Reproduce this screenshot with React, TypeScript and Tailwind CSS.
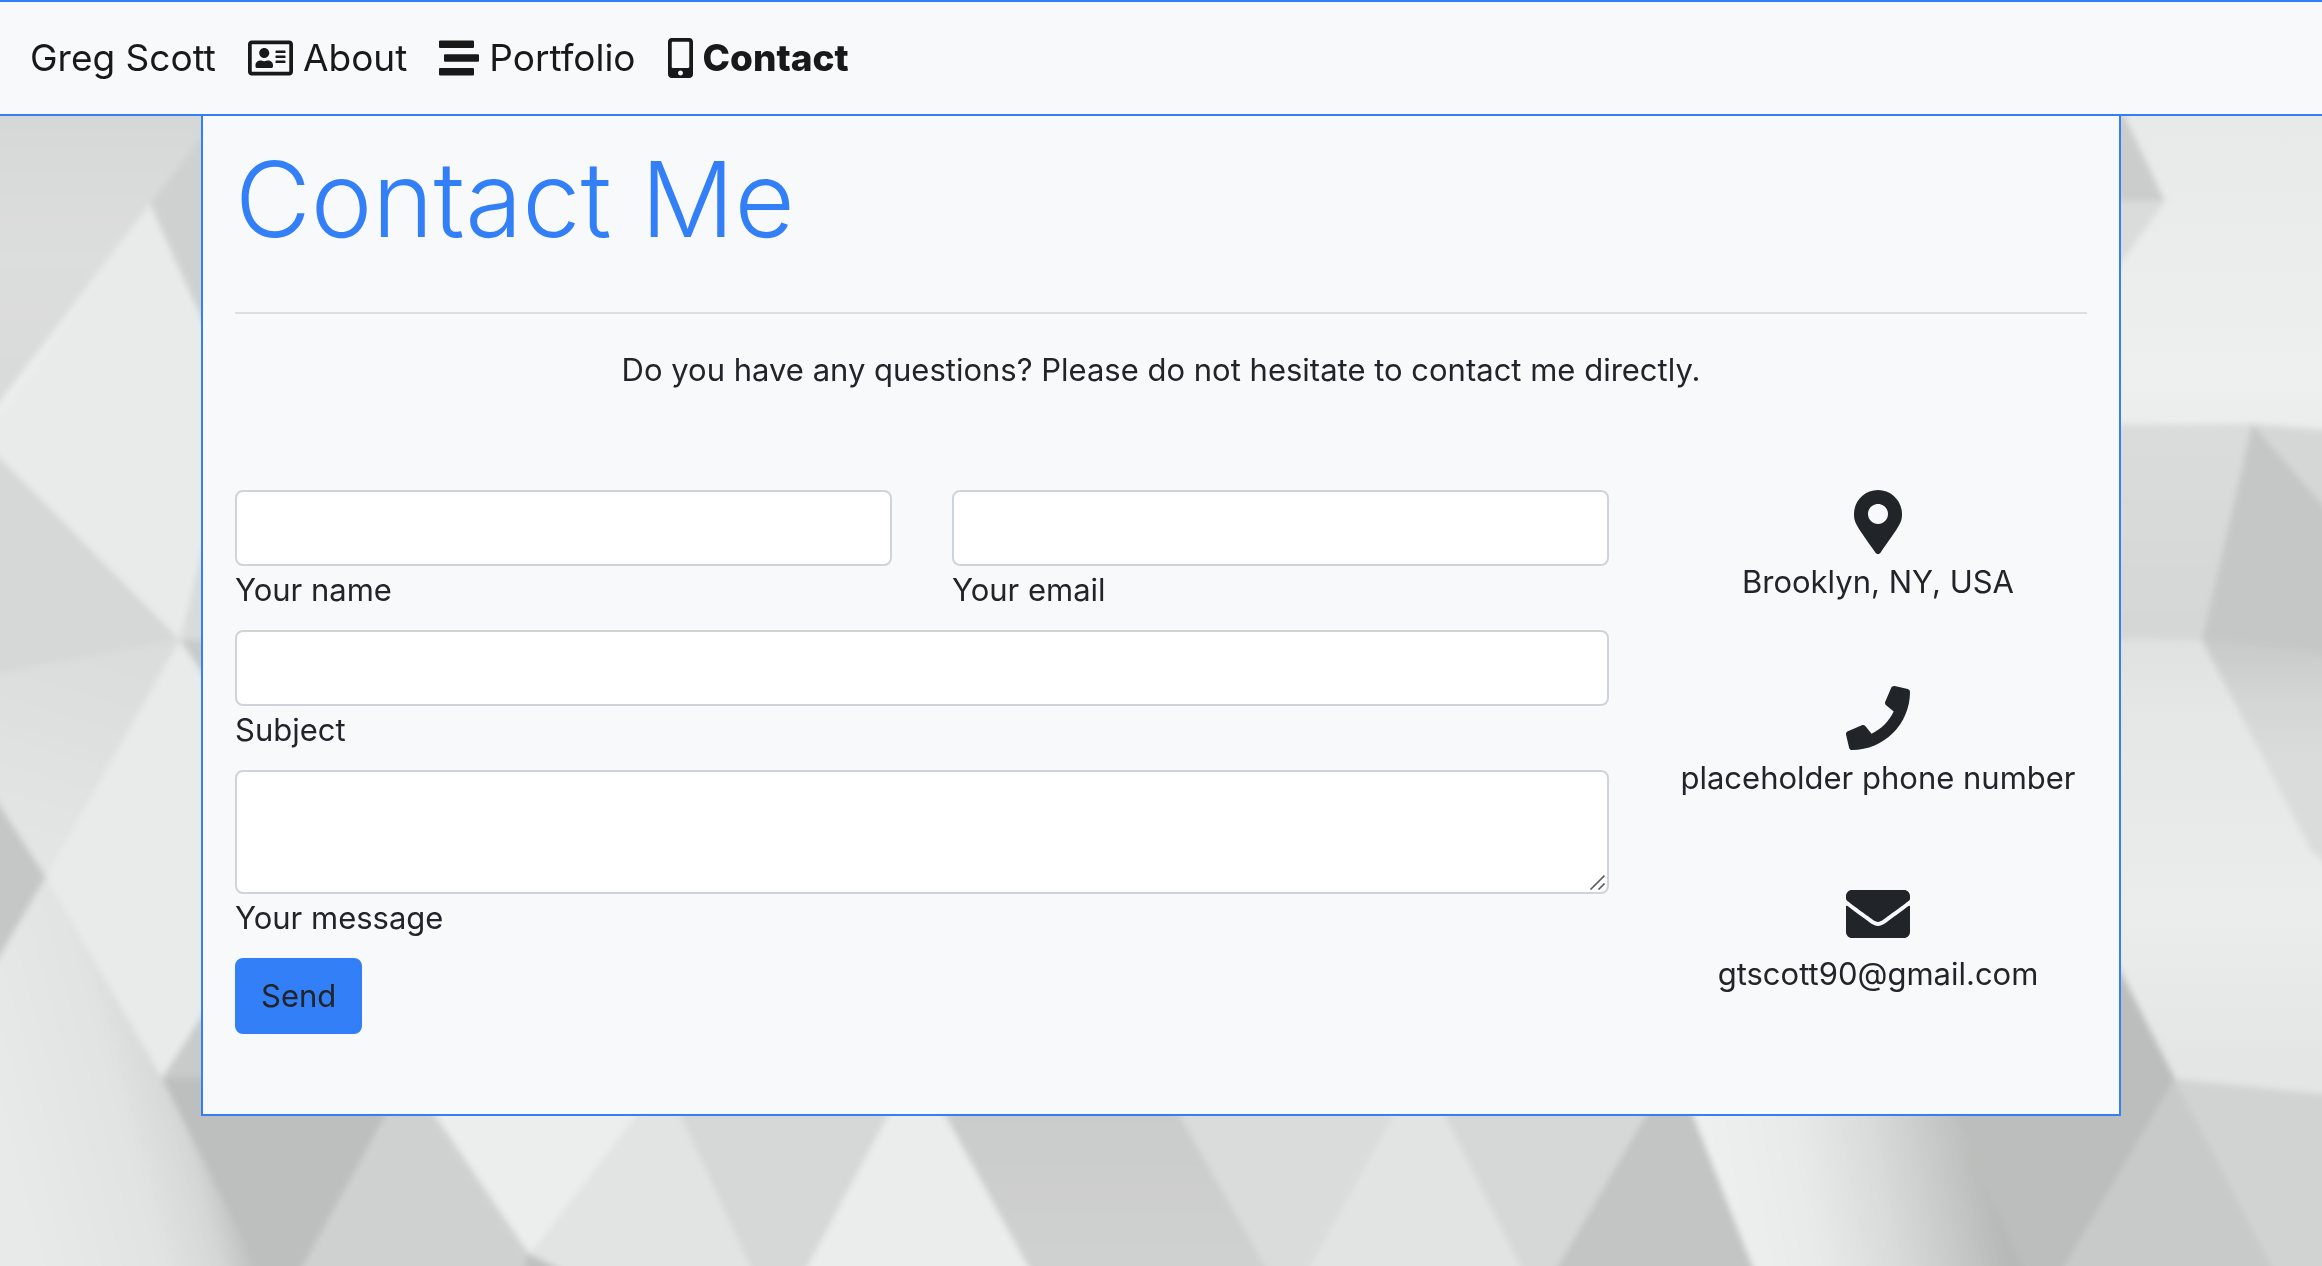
import type { ReactNode } from "react";
import {
  FaEnvelope,
  FaMapMarkerAlt,
  FaMobileAlt,
  FaPhone,
  FaRegAddressCard,
  FaStream,
} from "react-icons/fa";

const field =
  "block w-full rounded-lg border-2 border-[#ced4da] bg-white px-6 py-3 text-[31px] leading-12 text-[#495057] outline-none focus:border-[#327ff7] [&::-webkit-resizer]:bg-transparent";

const facets: [string, string][] = [
  // left side
  ["-20,90 260,90 150,204 -20,428", "url(#topLeft)"],
  ["150,204 215,120 260,120 260,450", "#cfd1d0"],
  ["-20,434 0,414 150,204 202,330 260,450 180,640 0,458 -20,440", "#e9ebea"],
  ["-20,438 0,458 180,640 -20,678", "#d6d8d7"],
  ["-20,677 180,640 46,877 -20,775", "url(#midLeft)"],
  ["180,640 202,551 260,450 260,640", "#d9dbda"],
  ["180,640 260,640 260,760", "#c8cac9"],
  ["46,877 180,640 260,760 260,960 162,1078", "#e8ebe9"],
  ["-20,775 46,877 -20,990", "#c5c7c6"],
  ["-20,990 46,877 162,1078 270,1290 -20,1290", "url(#corner)"],
  ["162,1078 202,1016 260,940 260,1078", "#c9cbca"],
  // bottom row
  ["162,1078 202,1078 400,1090 290,1290 267,1290", "#bcbfbd"],
  ["404,1084 414,1084 528,1253 528,1290 290,1290", "#cfd1d0"],
  ["414,1084 660,1084 530,1254", "#ebeeec"],
  ["528,1253 590,1270 590,1290 520,1290", "#bfc1c0"],
  ["660,1084 666,1084 761,1290 600,1290 530,1254", "#e2e4e3"],
  ["666,1084 905,1084 795,1290 761,1290", "#d6d8d7"],
  ["905,1084 928,1084 1041,1290 795,1290", "#ebedec"],
  ["928,1084 1162,1084 1279,1290 1041,1290", "url(#bottomMid)"],
  ["1162,1084 1411,1084 1297,1290 1279,1290", "#dadcdb"],
  ["1411,1084 1429,1084 1532,1290 1297,1290", "#e2e4e3"],
  ["1429,1084 1664,1084 1544,1290 1532,1290", "#d6d8d7"],
  ["1664,1084 1681,1084 1762,1290 1544,1290", "#c3c5c4"],
  ["1681,1084 1940,1084 2036,1290 1762,1290", "url(#sweep)"],
  ["1940,1084 2080,900 2122,974 2175,1079 2051,1290 2036,1290", "#bbbebc"],
  // right side
  ["2080,90 2112,90 2165,201 2080,201", "#cbcdcc"],
  ["2080,201 2165,201 2080,320", "#dadcdb"],
  ["2080,425 2252,424 2202,640 2080,638", "url(#band)"],
  ["2252,424 2342,431 2342,530", "#d5d7d6"],
  ["2252,424 2342,527 2342,658 2202,640", "#c5c7c6"],
  ["2202,640 2342,658 2342,875 2312,852", "url(#fold)"],
  ["2175,1079 2342,1096 2342,1290 2284,1290", "#d1d3d2"],
  ["2175,1079 2284,1290 2051,1290", "#c8cac9"],
];

function Background() {
  return (
    <svg
      aria-hidden="true"
      className="fixed inset-0 -z-10 h-full w-full"
      viewBox="0 0 2322 1266"
      preserveAspectRatio="xMidYMid slice"
    >
      <defs>
        <linearGradient id="base" x1="0" y1="0" x2="0" y2="1">
          <stop offset="0.1" stopColor="#e7eae8" />
          <stop offset="0.3" stopColor="#eef0ef" />
          <stop offset="0.5" stopColor="#dfe1e0" />
          <stop offset="0.56" stopColor="#e5e7e6" />
          <stop offset="0.72" stopColor="#eaedeb" />
          <stop offset="0.84" stopColor="#e3e6e4" />
        </linearGradient>
        <linearGradient id="topLeft" gradientUnits="userSpaceOnUse" x1="0" y1="116" x2="0" y2="400">
          <stop offset="0" stopColor="#d6d8d7" />
          <stop offset="0.5" stopColor="#dcdedd" />
          <stop offset="1" stopColor="#d8dad9" />
        </linearGradient>
        <linearGradient id="midLeft" gradientUnits="userSpaceOnUse" x1="100" y1="650" x2="40" y2="850">
          <stop offset="0" stopColor="#dbdddc" />
          <stop offset="1" stopColor="#e3e5e4" />
        </linearGradient>
        <linearGradient id="corner" gradientUnits="userSpaceOnUse" x1="20" y1="1220" x2="225" y2="1165">
          <stop offset="0" stopColor="#e7eae8" />
          <stop offset="0.6" stopColor="#e1e3e2" />
          <stop offset="0.85" stopColor="#d5d7d6" />
          <stop offset="1" stopColor="#bfc2c0" />
        </linearGradient>
        <linearGradient id="bottomMid" gradientUnits="userSpaceOnUse" x1="0" y1="1116" x2="0" y2="1266">
          <stop offset="0" stopColor="#cacccb" />
          <stop offset="1" stopColor="#cfd1d0" />
        </linearGradient>
        <linearGradient id="sweep" gradientUnits="userSpaceOnUse" x1="1705" y1="1190" x2="1985" y2="1140">
          <stop offset="0" stopColor="#eef1ef" />
          <stop offset="0.35" stopColor="#e7eae8" />
          <stop offset="0.6" stopColor="#dadcdb" />
          <stop offset="0.85" stopColor="#c5c7c6" />
          <stop offset="1" stopColor="#b6b9b7" />
        </linearGradient>
        <linearGradient id="band" gradientUnits="userSpaceOnUse" x1="0" y1="425" x2="0" y2="640">
          <stop offset="0" stopColor="#dadcdb" />
          <stop offset="1" stopColor="#d5d7d6" />
        </linearGradient>
        <linearGradient id="fold" gradientUnits="userSpaceOnUse" x1="0" y1="645" x2="0" y2="760">
          <stop offset="0" stopColor="#c9cbca" />
          <stop offset="0.5" stopColor="#d4d6d5" />
          <stop offset="1" stopColor="#dadcdb" />
        </linearGradient>
        <filter id="soft" x="-2%" y="-2%" width="104%" height="104%">
          <feGaussianBlur stdDeviation="3" />
        </filter>
      </defs>
      <rect width="2322" height="1266" fill="url(#base)" />
      <g filter="url(#soft)">
        {facets.map(([points, fill]) => (
          <polygon key={points} points={points} fill={fill} />
        ))}
      </g>
    </svg>
  );
}

function NavLink({ href, icon, children, active = false }: { href: string; icon?: ReactNode; children: ReactNode; active?: boolean }) {
  return (
    <a
      href={href}
      aria-current={active ? "page" : undefined}
      className={active ? "flex items-center gap-2.5 font-extrabold" : "flex items-center gap-2.5"}
    >
      {icon}
      {children}
    </a>
  );
}

function Field({ id, label, children }: { id: string; label: string; children: ReactNode }) {
  return (
    <div>
      {children}
      <label htmlFor={id} className="block">
        {label}
      </label>
    </div>
  );
}

function Detail({ icon, children }: { icon: ReactNode; children: ReactNode }) {
  return (
    <li className="flex flex-col items-center gap-1 whitespace-nowrap">
      {icon}
      <p>{children}</p>
    </li>
  );
}

export default function App() {
  return (
    <div className="min-h-screen font-['Inter',sans-serif] text-[31px] leading-12 text-[#212529]">
      <Background />
      <nav className="flex items-center gap-8 border-y-2 border-[#327ff7] bg-[#f8f9fb] px-[30px] py-7 text-[37px] leading-14 text-[#191919]">
        <NavLink href="#home">Greg Scott</NavLink>
        <NavLink href="#about" icon={<FaRegAddressCard className="h-10 w-[45px]" />}>
          About
        </NavLink>
        <NavLink href="#portfolio" icon={<FaStream className="h-10 w-10" />}>
          Portfolio
        </NavLink>
        <NavLink href="#contact" icon={<FaMobileAlt className="h-10 w-[25px]" />} active>
          Contact
        </NavLink>
      </nav>
      <main className="mx-auto max-w-[1920px] border-2 border-t-0 border-[#327ff7] bg-[#f8f9fb] px-8 pb-20">
        <h1 className="pt-4 text-[104px] leading-[134px] font-light text-[#327ff7]">Contact Me</h1>
        <hr className="mt-[46px] border-t-2 border-black/10" />
        <p className="mt-8 text-center">
          Do you have any questions? Please do not hesitate to contact me directly.
        </p>
        <div className="mt-24 grid grid-cols-4 gap-x-[60px]">
          <form className="col-span-3 flex flex-col gap-4" onSubmit={(event) => event.preventDefault()}>
            <div className="grid grid-cols-2 gap-x-[60px]">
              <Field id="name" label="Your name">
                <input id="name" name="name" type="text" className={field} />
              </Field>
              <Field id="email" label="Your email">
                <input id="email" name="email" type="text" className={field} />
              </Field>
            </div>
            <Field id="subject" label="Subject">
              <input id="subject" name="subject" type="text" className={field} />
            </Field>
            <Field id="message" label="Your message">
              <div className="relative">
                <textarea id="message" name="message" rows={2} className={field} />
                <svg
                  aria-hidden="true"
                  className="pointer-events-none absolute right-1 bottom-1 h-4 w-4"
                  viewBox="0 0 16 16"
                  fill="none"
                  stroke="#5c5c5c"
                  strokeWidth="1.6"
                >
                  <path d="M1.5 15.5 15.5 1.5M9.5 15.5 15.5 9.5" />
                </svg>
              </div>
            </Field>
            <button
              type="submit"
              className="self-start rounded-lg border-2 border-[#327ff7] bg-[#327ff7] px-6 py-3"
            >
              Send
            </button>
          </form>
          <ul className="flex flex-col gap-20">
            <Detail icon={<FaMapMarkerAlt className="h-16 w-16" />}>Brooklyn, NY, USA</Detail>
            <Detail icon={<FaPhone className="h-16 w-16" />}>placeholder phone number</Detail>
            <Detail icon={<FaEnvelope className="h-16 w-16" />}>gtscott90@gmail.com</Detail>
          </ul>
        </div>
      </main>
    </div>
  );
}
